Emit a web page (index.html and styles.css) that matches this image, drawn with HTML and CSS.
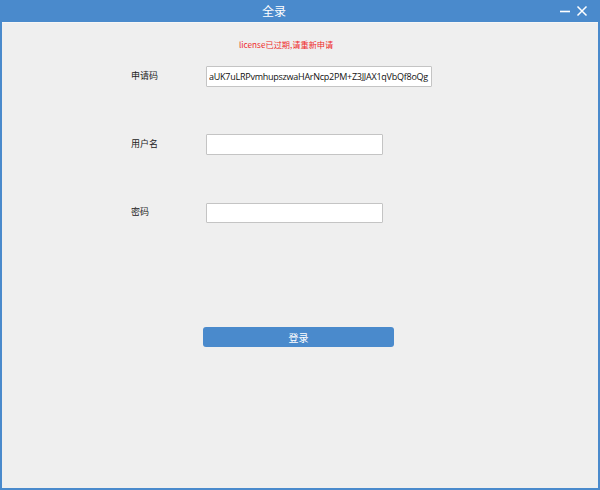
FILE: index.html
```html
<!DOCTYPE html>
<html lang="zh">
<head>
<meta charset="utf-8">
<title>全录</title>
<link rel="stylesheet" href="styles.css">
</head>
<body>
<div class="window">
  <div class="titlebar">
    <div class="title">全录</div>
    <div class="controls">
      <svg class="ctl" width="12" height="12" viewBox="0 0 12 12"><path d="M1 6.5H11" stroke="#fff" stroke-width="1.6"/></svg>
      <svg class="ctl" width="12" height="12" viewBox="0 0 12 12"><path d="M1.5 1.5L10.5 10.5M10.5 1.5L1.5 10.5" stroke="#fff" stroke-width="1.5"/></svg>
    </div>
  </div>
  <div class="content">
    <div class="msg">license已过期,请重新申请</div>
    <div class="row row-first">
      <div class="label">申请码</div>
      <input class="field field-wide" type="text" value="aUK7uLRPvmhupszwaHArNcp2PM+Z3JJAX1qVbQf8oQg">
    </div>
    <div class="row">
      <div class="label">用户名</div>
      <input class="field" type="text">
    </div>
    <div class="row">
      <div class="label">密码</div>
      <input class="field field-short" type="password">
    </div>
    <button class="login" type="button">登录</button>
  </div>
</div>
</body>
</html>
```
FILE: styles.css
```css
html, body {
  margin: 0;
  padding: 0;
  background: #efefef;
}
body {
  font-family: "Open Sans", "Noto Sans CJK SC", sans-serif;
}
.window {
  width: 600px;
  height: 490px;
  box-sizing: border-box;
  border: 2px solid #4a8acc;
  border-top: none;
  background: #efefef;
  display: flex;
  flex-direction: column;
}
.titlebar {
  height: 22px;
  margin: 0 -2px;
  background: #4a8acc;
  display: flex;
  align-items: center;
  flex-shrink: 0;
}
.title {
  flex: 1;
  text-align: center;
  color: #fff;
  font-family: "Noto Sans CJK SC", sans-serif;
  font-size: 12px;
  line-height: 22px;
  padding-left: 2px;
}
.controls {
  width: 54px;
  display: flex;
  align-items: center;
  gap: 5px;
  padding-left: 13px;
  box-sizing: border-box;
}
.ctl {
  display: block;
}
.content {
  flex: 1;
  padding: 15px 0 0 129px;
  border-top: 1px solid #f6f6f6;
}
.msg {
  margin-left: 108px;
  color: #ee2a2a;
  font-family: "Noto Sans CJK SC", sans-serif;
  font-size: 8.2px;
  line-height: 12px;
  height: 12px;
}
.row {
  display: flex;
  align-items: center;
  height: 21px;
  margin-top: 47px;
}
.row-first {
  margin-top: 16px;
}
.label {
  width: 75px;
  flex-shrink: 0;
  padding-bottom: 2px;
  font-family: "Noto Sans CJK SC", sans-serif;
  font-size: 9px;
  color: #222;
}
.field {
  box-sizing: border-box;
  width: 177px;
  height: 21px;
  margin: 0;
  border: 1px solid #c4c4c4;
  border-radius: 1px;
  background: #fff;
  padding: 0 3px;
  font-family: "Open Sans", sans-serif;
  font-size: 9px;
  color: #111;
  outline: none;
}
.field-wide {
  width: 226px;
  padding: 0 1px 0 2px;
  letter-spacing: -0.25px;
}
.field-short {
  height: 20px;
}
.login {
  display: block;
  margin: 104px 0 0 72px;
  width: 191px;
  height: 20px;
  border: none;
  border-radius: 3px;
  background: #4a8acc;
  color: #fff;
  font-family: "Noto Sans CJK SC", sans-serif;
  font-size: 10px;
  padding: 0;
}
```
